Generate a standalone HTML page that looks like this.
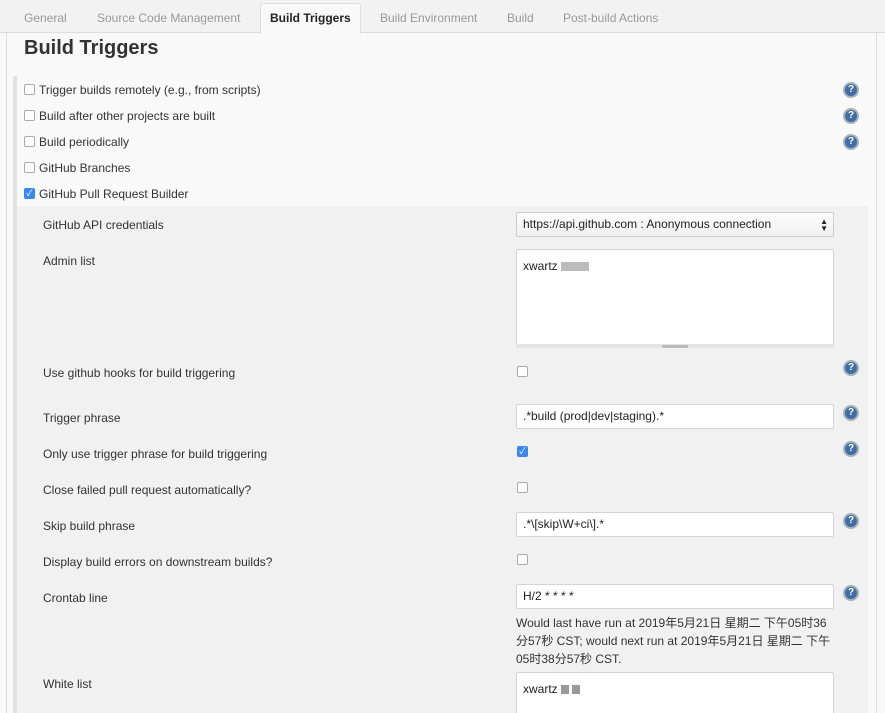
<!DOCTYPE html>
<html><head><meta charset="utf-8"><style>
*{box-sizing:border-box;margin:0;padding:0}
html,body{width:885px;height:713px;overflow:hidden}
body{background:#f9f9f9;font-family:"Liberation Sans","Noto Sans CJK SC",sans-serif;font-size:12px;color:#333;position:relative}
.a{position:absolute;white-space:nowrap}
.tabs{position:absolute;left:0;top:0;width:885px;height:33px;background:#f2f2f2;border-bottom:1px solid #ddd}
.tab{position:absolute;top:11px;color:#999;font-size:12px}
.cb{position:absolute;width:11px;height:11px;border:1px solid #aaa;border-radius:2px;background:#fff}
.cb.on{background:#3b86f0;border-color:#3b86f0;color:#fff;font-size:9px;line-height:9px;text-align:center}
.help{position:absolute;width:16px;height:16px;border-radius:50%;background:#3f6ea6;border:2px solid #a8b0ba;color:#fff;font-weight:bold;font-size:10px;line-height:12px;text-align:center}
.inp{position:absolute;background:#fff;border:1px solid #d4d4d4;border-radius:2px;padding-left:6px;font-size:12px;color:#222}
.lbl{position:absolute;font-size:12px;color:#333}
</style></head><body>
<div class="tabs">
<span class="tab" style="left:24px">General</span>
<span class="tab" style="left:97px">Source Code Management</span>
<div style="position:absolute;left:260px;top:3px;width:101px;height:31px;background:#f9f9f9;border:1px solid #ddd;border-bottom:none;border-radius:3px 3px 0 0"></div>
<span class="tab" style="left:270px;color:#222;font-weight:bold">Build Triggers</span>
<span class="tab" style="left:380px">Build Environment</span>
<span class="tab" style="left:507px">Build</span>
<span class="tab" style="left:563px">Post-build Actions</span>
</div>
<div style="position:absolute;left:6px;top:33px;width:1px;height:680px;background:#ddd"></div>
<div style="position:absolute;left:876px;top:33px;width:1px;height:680px;background:#ddd"></div>
<div class="a" style="left:24px;top:37px;font-size:20px;font-weight:bold;color:#333">Build Triggers</div>
<div style="position:absolute;left:13px;top:76px;width:4px;height:637px;background:#e2e2e2"></div>
<div style="position:absolute;left:17px;top:206px;width:851px;height:507px;background:#f1f1f1"></div>

<div class="cb" style="left:24px;top:84px"></div><span class="lbl" style="left:39px;top:83px">Trigger builds remotely (e.g., from scripts)</span>
<div class="cb" style="left:24px;top:110px"></div><span class="lbl" style="left:39px;top:109px">Build after other projects are built</span>
<div class="cb" style="left:24px;top:136px"></div><span class="lbl" style="left:39px;top:135px">Build periodically</span>
<div class="cb" style="left:24px;top:162px"></div><span class="lbl" style="left:39px;top:161px">GitHub Branches</span>
<div class="cb on" style="left:24px;top:188px">✓</div><span class="lbl" style="left:39px;top:187px">GitHub Pull Request Builder</span>
<div class="help" style="left:843px;top:82px">?</div>
<div class="help" style="left:843px;top:108px">?</div>
<div class="help" style="left:843px;top:134px">?</div>

<span class="lbl" style="left:43px;top:218px">GitHub API credentials</span>
<div class="inp" style="left:516px;top:212px;width:318px;height:25px;line-height:23px;background:linear-gradient(#fdfdfd,#f0f0f0);border-color:#ccc">https://api.github.com : Anonymous connection<span style="position:absolute;right:5px;top:0;font-size:8px;line-height:7px;padding-top:5px">▲<br>▼</span></div>

<span class="lbl" style="left:43px;top:254px">Admin list</span>
<div class="inp" style="left:516px;top:249px;width:318px;height:96px;padding-top:9px">xwartz <span style="display:inline-block;width:28px;height:9px;background:#bbb;vertical-align:-1px"></span></div>
<div style="position:absolute;left:516px;top:344px;width:318px;height:4px;background:#e4e4e4"></div>
<div style="position:absolute;left:662px;top:345px;width:26px;height:3px;background:#bbb"></div>

<span class="lbl" style="left:43px;top:366px">Use github hooks for build triggering</span>
<div class="cb" style="left:517px;top:366px"></div><div class="help" style="left:843px;top:360px">?</div>

<span class="lbl" style="left:43px;top:411px">Trigger phrase</span>
<div class="inp" style="left:516px;top:404px;width:318px;height:25px;line-height:23px">.*build (prod|dev|staging).*</div><div class="help" style="left:843px;top:405px">?</div>

<span class="lbl" style="left:43px;top:447px">Only use trigger phrase for build triggering</span>
<div class="cb on" style="left:517px;top:446px">✓</div><div class="help" style="left:843px;top:441px">?</div>

<span class="lbl" style="left:43px;top:483px">Close failed pull request automatically?</span>
<div class="cb" style="left:517px;top:482px"></div>

<span class="lbl" style="left:43px;top:519px">Skip build phrase</span>
<div class="inp" style="left:516px;top:512px;width:318px;height:25px;line-height:23px">.*\[skip\W+ci\].*</div><div class="help" style="left:843px;top:513px">?</div>

<span class="lbl" style="left:43px;top:555px">Display build errors on downstream builds?</span>
<div class="cb" style="left:517px;top:554px"></div>

<span class="lbl" style="left:43px;top:591px">Crontab line</span>
<div class="inp" style="left:516px;top:584px;width:318px;height:25px;line-height:23px">H/2 * * * *</div><div class="help" style="left:843px;top:585px">?</div>
<div style="position:absolute;left:516px;top:614px;width:320px;font-size:12px;line-height:18px;color:#333">Would last have run at 2019年5月21日 星期二 下午05时36分57秒 CST; would next run at 2019年5月21日 星期二 下午05时38分57秒 CST.</div>

<span class="lbl" style="left:43px;top:677px">White list</span>
<div class="inp" style="left:516px;top:672px;width:318px;height:50px;padding-top:9px">xwartz <span style="display:inline-block;width:8px;height:9px;background:#999;vertical-align:-1px"></span> <span style="display:inline-block;width:8px;height:9px;background:#999;vertical-align:-1px"></span></div>
</body></html>
